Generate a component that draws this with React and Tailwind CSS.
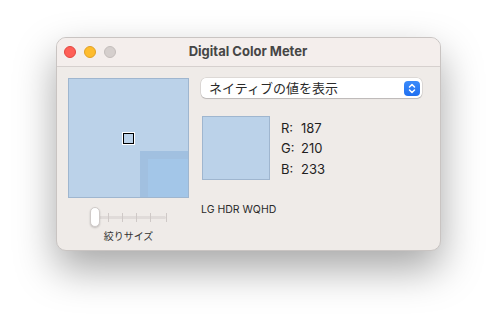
const font = { fontFamily: 'Inter, "Noto Sans CJK JP", "Liberation Sans", sans-serif' };

function Stepper() {
  return (
    <div className="w-[16px] h-[15px] rounded-[4px] bg-gradient-to-b from-[#3b8bfa] to-[#1f6ff0] flex items-center justify-center">
      <svg width="8" height="11" viewBox="0 0 8 11" fill="none" stroke="white" strokeWidth="1.5" strokeLinecap="round" strokeLinejoin="round">
        <path d="M1.5 4 L4 1.5 L6.5 4" />
        <path d="M1.5 7 L4 9.5 L6.5 7" />
      </svg>
    </div>
  );
}

export default function App() {
  const rgb = [
    ['R:', 187],
    ['G:', 210],
    ['B:', 233],
  ];

  return (
    <div className="w-[497px] h-[325px] bg-white overflow-hidden pt-[37px] pl-[56px]" style={font}>
      <div className="w-[385px] h-[214px] rounded-[10px] bg-[#efebe8] border border-[#c9c4c2] shadow-[0_18px_40px_rgba(0,0,0,0.35)] overflow-hidden flex flex-col">
        {/* title bar */}
        <div className="h-[29px] shrink-0 bg-[#f4eeec] border-b border-[#d6d0ce] flex items-center relative">
          <div className="flex gap-[8px] pl-[7px]">
            <div className="w-[12px] h-[12px] rounded-full bg-[#fe5f57] border border-[#e2463f]" />
            <div className="w-[12px] h-[12px] rounded-full bg-[#febc2e] border border-[#e0a126]" />
            <div className="w-[12px] h-[12px] rounded-full bg-[#d5cfcd] border border-[#c3bdbb]" />
          </div>
          <div className="absolute inset-0 flex items-center justify-center text-[13px] font-bold text-[#464646] pr-[1px]">
            Digital Color Meter
          </div>
        </div>

        {/* body */}
        <div className="flex pl-[11px] pt-[11px] gap-[12px]">
          {/* left column */}
          <div className="w-[121px] flex flex-col items-center">
            <div className="w-[121px] h-[120px] bg-[#bbd2e9] border border-[#9fb6cf] relative overflow-hidden">
              <div className="absolute left-[54px] top-[54px] w-[11px] h-[11px] border-[1.5px] border-black outline outline-1 outline-white" />
              <div className="absolute left-[71px] top-[72px] right-0 bottom-0 bg-[#a1c0e0]" />
              <div className="absolute left-[79px] top-[80px] right-0 bottom-0 bg-[#a3c6e8]" />
            </div>
            <div className="w-[80px] h-[20px] mt-[9px] relative flex items-center">
              <div className="absolute left-[10px] right-[3px] top-[9px] h-[3px] bg-[#e0dbd9] rounded-full" />
              {[19, 33, 47, 61, 77].map((x) => (
                <div key={x} className="absolute top-[6px] w-[1px] h-[9px] bg-[#cfc9c7]" style={{ left: x }} />
              ))}
              <div className="absolute left-[1px] top-0 w-[10px] h-[20px] rounded-full bg-white border border-[#d0cbc9] shadow-[0_1px_2px_rgba(0,0,0,0.2)]" />
            </div>
            <div className="mt-[2px] text-[10px] text-[#333] leading-[14px]">絞りサイズ</div>
          </div>

          {/* right column */}
          <div className="flex flex-col pt-0">
            <div className="w-[221px] h-[20px] rounded-[5px] bg-white shadow-[0_0_0_0.5px_rgba(0,0,0,0.15),0_1px_1px_rgba(0,0,0,0.15)] flex items-center justify-between pl-[8px] pr-[2px]">
              <span className="text-[13px] text-[#2a2a2a] leading-none">ネイティブの値を表示</span>
              <Stepper />
            </div>
            <div className="flex mt-[18px] ml-[1px]">
              <div className="w-[68px] h-[64px] bg-[#bbd2e9] border border-[#9fb6cf]" />
              <div className="ml-[11px] flex flex-col pt-[2px]">
                {rgb.map(([l, v]) => (
                  <div key={l} className="flex h-[20.5px] items-center text-[13px] text-[#1f1f1f]">
                    <span className="w-[20px]">{l}</span>
                    <span>{v}</span>
                  </div>
                ))}
              </div>
            </div>
            <div className="mt-[22px] text-[10.5px] text-[#2a2a2a]">LG HDR WQHD</div>
          </div>
        </div>
      </div>
    </div>
  );
}
